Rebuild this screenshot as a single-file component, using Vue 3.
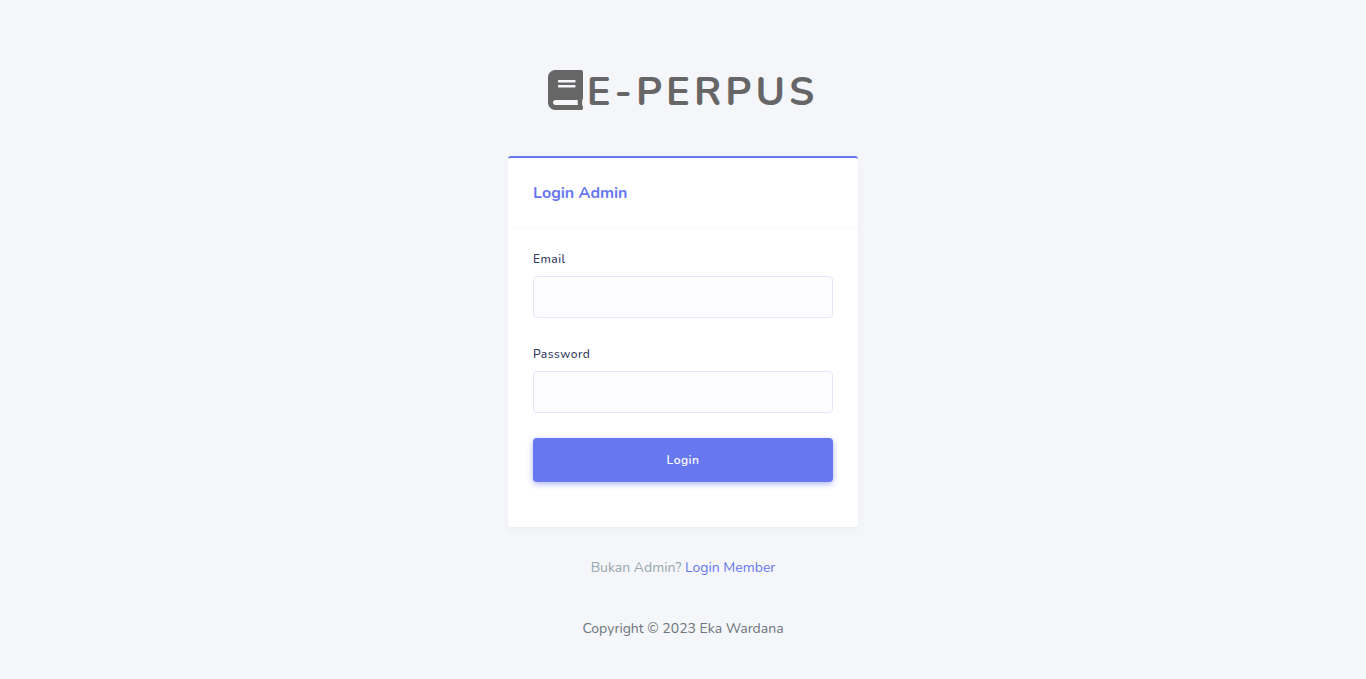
<script setup>
import { ref } from 'vue'

const email = ref('')
const password = ref('')
</script>

<template>
  <main class="page">
    <h1 class="brand">
      <svg class="brand-icon" viewBox="0 0 448 512" aria-hidden="true">
        <path fill="currentColor" d="M448 360V24c0-13.300-10.700-24-24-24H96C43 0 0 43 0 96v320c0 53 43 96 96 96h328c13.300 0 24-10.700 24-24v-16c0-7.500-3.500-14.300-8.900-18.700-4.200-15.400-4.200-59.300 0-74.700 5.400-4.300 8.900-11.100 8.900-18.600zM128 134c0-3.300 2.700-6 6-6h212c3.300 0 6 2.700 6 6v20c0 3.300-2.700 6-6 6H134c-3.300 0-6-2.700-6-6v-20zm0 64c0-3.300 2.700-6 6-6h212c3.300 0 6 2.700 6 6v20c0 3.300-2.700 6-6 6H134c-3.300 0-6-2.700-6-6v-20zm253.400 250H96c-17.700 0-32-14.300-32-32 0-17.600 14.400-32 32-32h285.400c-1.900 17.100-1.900 46.900 0 64z" />
      </svg><span>E-PERPUS</span>
    </h1>

    <section class="card">
      <header class="card-header">
        <h2>Login Admin</h2>
      </header>
      <form class="card-body" @submit.prevent>
        <div class="field">
          <label for="email">Email</label>
          <input id="email" v-model="email" type="email" name="email" />
        </div>
        <div class="field">
          <label for="password">Password</label>
          <input id="password" v-model="password" type="password" name="password" />
        </div>
        <button type="submit">Login</button>
      </form>
    </section>

    <p class="switch">Bukan Admin? <a href="#">Login Member</a></p>
    <footer>Copyright © 2023 Eka Wardana</footer>
  </main>
</template>

<style>
body {
  margin: 0;
  background: #f4f6f9;
}
</style>

<style scoped>
.page {
  box-sizing: border-box;
  min-height: 100vh;
  padding: 62px 16px 32px;
  display: flex;
  flex-direction: column;
  align-items: center;
  font-family: Nunito, "Open Sans", sans-serif;
  font-size: 14px;
  line-height: 24px;
  color: #6c757d;
}
.brand {
  margin: 0 0 34px;
  font-size: 40px;
  line-height: 60px;
  font-weight: 700;
  letter-spacing: 4px;
  color: #666;
}
.brand-icon {
  width: 35px;
  height: 40px;
  margin-right: 4px;
  vertical-align: -5px;
}
.card {
  box-sizing: border-box;
  width: 100%;
  max-width: 350px;
  background: #fff;
  border-top: 2px solid #6777ef;
  border-radius: 3px;
  box-shadow: 0 4px 8px rgba(0, 0, 0, 0.03);
}
.card-header {
  display: flex;
  align-items: center;
  min-height: 69px;
  padding: 0 25px;
  border-bottom: 1px solid #f9f9f9;
}
h2 {
  margin: 0;
  font-size: 16px;
  line-height: 28px;
  font-weight: 700;
  color: #6777ef;
}
.card-body {
  padding: 20px 25px 45px;
}
.field {
  margin-bottom: 25px;
}
label {
  display: block;
  margin-bottom: 5px;
  font-size: 12px;
  line-height: 23px;
  font-weight: 500;
  letter-spacing: 0.5px;
  color: #34395e;
}
input {
  display: block;
  box-sizing: border-box;
  width: 100%;
  height: 42px;
  padding: 10px 15px;
  border: 1px solid #e4e6fc;
  border-radius: 4px;
  background: #fdfdff;
  font: inherit;
  color: #495057;
}
button {
  display: block;
  width: 100%;
  height: 44px;
  border: 0;
  border-radius: 4px;
  background: #6777ef;
  box-shadow: 0 2px 6px #acb5f6;
  font: inherit;
  font-size: 12px;
  font-weight: 600;
  letter-spacing: 0.5px;
  color: #fff;
  cursor: pointer;
}
.switch {
  margin: 29px 0 37px;
  color: #98a6ad;
}
a {
  color: #6777ef;
  text-decoration: none;
}
</style>
